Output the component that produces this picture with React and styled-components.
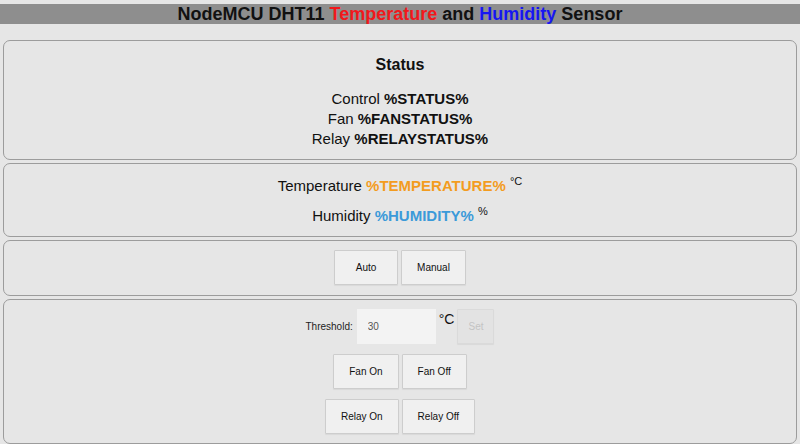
import React from 'react'
import styled, { createGlobalStyle } from 'styled-components'

const GlobalStyle = createGlobalStyle`
    html, body {
        margin: 0;
        padding: 0;
        background: #e6e6e6;
        font-family: "Liberation Sans", Arial, sans-serif;
        color: #111;
    }
`

const Header = styled.h1`
    margin: 4px 0 0;
    height: 20px;
    line-height: 20px;
    background: #8e8e8e;
    font-size: 18px;
    font-weight: 700;
    text-align: center;
    color: #111;
`

const Colored = styled.span`
    color: ${props => props.color};
`

const Main = styled.main`
    display: flex;
    flex-direction: column;
    gap: 3px;
    padding: 16px 3px 0;
`

const Panel = styled.section`
    border: 1px solid #9c9c9c;
    border-radius: 7px;
    padding: ${props => props.padding};
    display: flex;
    flex-direction: column;
    align-items: center;
    gap: ${props => props.gap || '0px'};
`

const StatusTitle = styled.h3`
    margin: 0 0 14px;
    font-size: 16px;
    line-height: 20px;
    font-weight: 700;
`

const Line = styled.p`
    margin: 0;
    font-size: 15px;
    line-height: 20px;
    text-align: center;
`

const Value = styled.b`
    font-weight: 700;
    color: ${props => props.color || '#111'};
`

const Sup = styled.sup`
    font-size: 11px;
    line-height: 0;
    vertical-align: 6px;
`

const Row = styled.div`
    display: flex;
    align-items: ${props => props.align || 'center'};
    justify-content: center;
    gap: ${props => props.gap || '3px'};
    height: 35px;
`

const Button = styled.button`
    height: 35px;
    min-width: 64px;
    padding: 0 15px;
    font-family: "Liberation Sans", Arial, sans-serif;
    font-size: 10px;
    color: #111;
    background: #f0f0f0;
    border: 1px solid #cdcdcd;
    border-radius: 1px;
    box-shadow: 0 1px 1px rgba(0, 0, 0, 0.06);
    cursor: pointer;

    &:disabled {
        min-width: 36px;
        padding: 0 10px;
        color: #c4c4c4;
        background: #e3e3e3;
        border-color: #dadada;
        cursor: default;
    }
`

const Label = styled.label`
    font-size: 10px;
    color: #222;
    margin-right: 1px;
`

const Input = styled.input`
    box-sizing: border-box;
    width: 79px;
    height: 35px;
    padding: 0 11px;
    border: none;
    background: #f3f3f3;
    font-family: "Liberation Sans", Arial, sans-serif;
    font-size: 10px;
    color: #555;
    outline: none;
`

const Unit = styled.span`
    font-size: 14px;
    line-height: 14px;
    align-self: flex-start;
    margin-top: 3px;
`

export default function App() {
    return (
        <>
            <GlobalStyle />
            <Header>
                NodeMCU DHT11 <Colored color="#f2171b">Temperature</Colored> and{' '}
                <Colored color="#1616f2">Humidity</Colored> Sensor
            </Header>
            <Main>
                <Panel padding="14px 0 10px">
                    <StatusTitle>Status</StatusTitle>
                    <Line>Control <Value>%STATUS%</Value></Line>
                    <Line>Fan <Value>%FANSTATUS%</Value></Line>
                    <Line>Relay <Value>%RELAYSTATUS%</Value></Line>
                </Panel>
                <Panel padding="12px 0 10px" gap="10px">
                    <Line>
                        Temperature <Value color="#f39c1f">%TEMPERATURE%</Value> <Sup>&deg;C</Sup>
                    </Line>
                    <Line>
                        Humidity <Value color="#3b9ad9">%HUMIDITY%</Value> <Sup>%</Sup>
                    </Line>
                </Panel>
                <Panel padding="9px 0 10px">
                    <Row>
                        <Button>Auto</Button>
                        <Button>Manual</Button>
                    </Row>
                </Panel>
                <Panel padding="9px 0 9px" gap="10px">
                    <Row gap="3px">
                        <Label htmlFor="threshold">Threshold:</Label>
                        <Input id="threshold" defaultValue="30" />
                        <Unit>&deg;C</Unit>
                        <Button disabled>Set</Button>
                    </Row>
                    <Row>
                        <Button>Fan On</Button>
                        <Button>Fan Off</Button>
                    </Row>
                    <Row>
                        <Button>Relay On</Button>
                        <Button>Relay Off</Button>
                    </Row>
                </Panel>
            </Main>
        </>
    )
}
